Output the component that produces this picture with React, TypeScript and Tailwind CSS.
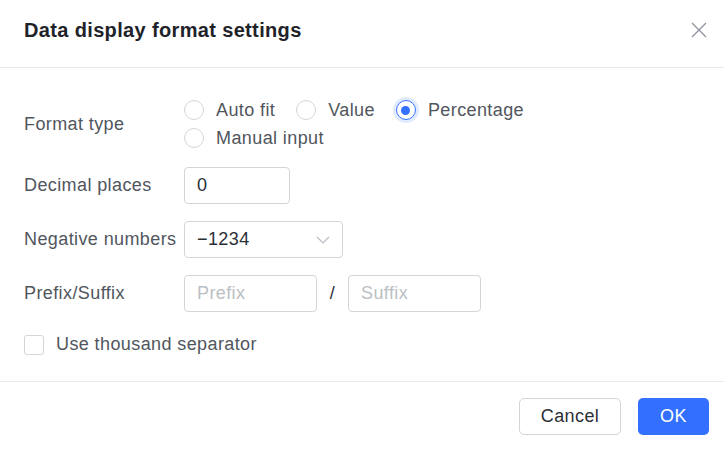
import { useState } from "react";

export default function App() {
  const [format, setFormat] = useState("percentage");
  const [thousand, setThousand] = useState(false);

  return (
    <div className="w-[724px] h-[454px] bg-white font-['Liberation_Sans',Arial,sans-serif] text-[#51565d] overflow-hidden">
      {/* Header */}
      <div className="h-[68px] border-b border-[#e8e9eb] pl-6 pr-[17px] pb-[7px] flex items-center justify-between">
        <h2 className="text-[20px] font-bold tracking-[0.35px] text-[#1f2329]">
          Data display format settings
        </h2>
        <button type="button" aria-label="Close" className="text-[#8f959e]">
          <svg width="16" height="16" viewBox="0 0 16 16" fill="none" stroke="currentColor" strokeWidth="1.4">
            <path d="M1 1l14 14M15 1L1 15" />
          </svg>
        </button>
      </div>

      {/* Body */}
      <div className="h-[314px] border-b border-[#e8e9eb] pl-6 pt-[28px] text-[18px] tracking-[0.4px]">
        <div className="flex">
          <div className="w-[160px] self-center">Format type</div>
          <div className="flex flex-col">
            <div className="h-[28px] flex items-center gap-[21px]">
              <Radio label="Auto fit" checked={format === "auto"} onClick={() => setFormat("auto")} />
              <Radio label="Value" checked={format === "value"} onClick={() => setFormat("value")} />
              <Radio label="Percentage" checked={format === "percentage"} onClick={() => setFormat("percentage")} />
            </div>
            <div className="h-[28px] flex items-center">
              <Radio label="Manual input" checked={format === "manual"} onClick={() => setFormat("manual")} />
            </div>
          </div>
        </div>

        <div className="flex items-center mt-[15px]">
          <div className="w-[160px]">Decimal places</div>
          <div className="w-[106px] h-[37px] border border-[#d3d5d8] rounded-[4px] px-3 flex items-center text-[#2b2f36]">
            0
          </div>
        </div>

        <div className="flex items-center mt-[17px]">
          <div className="w-[160px]">Negative numbers</div>
          <div className="w-[159px] h-[37px] border border-[#d3d5d8] rounded-[4px] pl-3 pr-[12px] flex items-center justify-between text-[#2b2f36]">
            <span>−1234</span>
            <svg width="14" height="8" viewBox="0 0 14 8" fill="none" stroke="#b8bcc2" strokeWidth="1.2">
              <path d="M1 1l6 6 6-6" />
            </svg>
          </div>
        </div>

        <div className="flex items-center mt-[17px]">
          <div className="w-[160px]">Prefix/Suffix</div>
          <div className="w-[133px] h-[37px] border border-[#d3d5d8] rounded-[4px] px-3 flex items-center text-[#bbbfc4]">
            Prefix
          </div>
          <div className="w-[31px] text-center text-[#2b2f36]">/</div>
          <div className="w-[133px] h-[37px] border border-[#d3d5d8] rounded-[4px] px-3 flex items-center text-[#bbbfc4]">
            Suffix
          </div>
        </div>

        <div className="flex items-center gap-3 mt-[19px] cursor-pointer" onClick={() => setThousand(!thousand)}>
          <span
            className={
              thousand
                ? "w-[20px] h-[20px] rounded-[3px] bg-[#3370ff] border border-[#3370ff]"
                : "w-[20px] h-[20px] rounded-[3px] border border-[#d3d5d8] bg-white"
            }
          ></span>
          <span>Use thousand separator</span>
        </div>
      </div>

      {/* Footer */}
      <div className="flex justify-end gap-[17px] pt-4 pr-[15px] text-[18px] tracking-[0.4px]">
        <button
          type="button"
          className="w-[102px] h-[37px] rounded-[5px] border border-[#d3d5d8] bg-white text-[#2b2f36]"
        >
          Cancel
        </button>
        <button
          type="button"
          className="w-[71px] h-[37px] rounded-[5px] bg-[#3370ff] text-white"
        >
          OK
        </button>
      </div>
    </div>
  );
}

function Radio({ label, checked, onClick }: { label: string; checked: boolean; onClick: () => void }) {
  return (
    <div className="flex items-center gap-3 cursor-pointer" onClick={onClick}>
      {checked ? (
        <span className="w-[20px] h-[20px] rounded-full border-[1.5px] border-[#3370ff] ring-[3px] ring-[#e1eaff] flex items-center justify-center">
          <span className="w-[9px] h-[9px] rounded-full bg-[#3370ff]"></span>
        </span>
      ) : (
        <span className="w-[20px] h-[20px] rounded-full border border-[#d3d5d8] bg-white"></span>
      )}
      <span>{label}</span>
    </div>
  );
}
